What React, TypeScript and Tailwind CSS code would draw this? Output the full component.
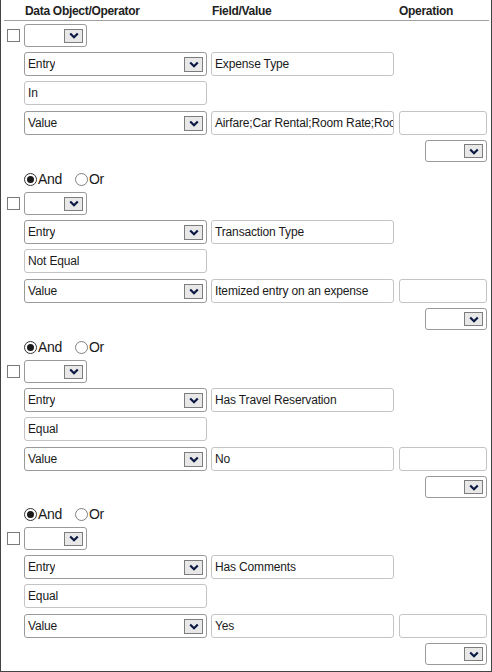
import React from "react";

const Chevron = () => (
  <svg width="10" height="7" viewBox="0 0 10 7">
    <path d="M1.2 1.5 L5 5.2 L8.8 1.5" fill="none" stroke="#0a1a44" strokeWidth="2.2" />
  </svg>
);

const DropBtn = ({ h }: { h: number }) => (
  <span
    className="flex items-center justify-center w-[19px] border border-[#7d7d7d] bg-[#e8e8e8] shrink-0"
    style={{ height: h }}
  >
    <Chevron />
  </span>
);

const Select = ({ label, w, h, btnH }: { label?: string; w: number; h: number; btnH: number }) => (
  <div
    className="flex items-center justify-between rounded-[3px] border border-[#9a9a9a] bg-white pl-[3px] pr-[3px] shrink-0"
    style={{ width: w, height: h }}
  >
    <span className="truncate">{label ?? ""}</span>
    <DropBtn h={btnH} />
  </div>
);

const Input = ({ value, w }: { value?: string; w: number }) => (
  <div
    className="flex items-center rounded-[3px] border border-[#c4c4c4] bg-white pl-[3px] overflow-hidden whitespace-nowrap shrink-0 h-[24px]"
    style={{ width: w }}
  >
    {value ?? ""}
  </div>
);

const Radio = ({ checked, label }: { checked: boolean; label: string }) => (
  <span className="flex items-center">
    <span
      className={
        "flex items-center justify-center w-[13px] h-[13px] rounded-full border bg-white " +
        (checked ? "border-[#333]" : "border-[#808080]")
      }
    >
      {checked && <span className="block w-[7px] h-[7px] rounded-full bg-[#1a1a1a]" />}
    </span>
    <span className="ml-[1px] text-[14px] leading-[16px] tracking-[-0.3px] text-[#1a1a1a]">{label}</span>
  </span>
);

type Row = { field: string; op: string; value: string };

const rows: Row[] = [
  { field: "Expense Type", op: "In", value: "Airfare;Car Rental;Room Rate;Room Tax" },
  { field: "Transaction Type", op: "Not Equal", value: "Itemized entry on an expense" },
  { field: "Has Travel Reservation", op: "Equal", value: "No" },
  { field: "Has Comments", op: "Equal", value: "Yes" },
];

const Block = ({ r, i }: { r: Row; i: number }) => (
  <div className="flex flex-col">
    {i === 0 ? (
      <div className="h-[3px]" />
    ) : (
      <div
        className={
          (i === 3 ? "h-[29px] pt-[3px]" : "h-[30px] pt-[4px]") + " pl-[23px] flex items-center gap-[13px]"
        }
      >
        <Radio checked label="And" />
        <Radio checked={false} label="Or" />
      </div>
    )}
    <div className="flex items-center pl-[6px] gap-[4px]">
      <span className="block w-[13px] h-[13px] border border-[#7a7a7a] bg-white" />
      <Select w={63} h={23} btnH={14} />
    </div>
    <div className="flex pl-[23px] mt-[5px]">
      <Select label="Entry" w={183} h={24} btnH={15} />
      <div className="ml-[4px]">
        <Input value={r.field} w={183} />
      </div>
    </div>
    <div className="flex pl-[23px] mt-[5px]">
      <Input value={r.op} w={183} />
    </div>
    <div className="flex pl-[23px] mt-[6px]">
      <Select label="Value" w={183} h={24} btnH={15} />
      <div className="ml-[4px]">
        <Input value={r.value} w={183} />
      </div>
      <div className="ml-[5px]">
        <Input w={88} />
      </div>
    </div>
    <div className="flex justify-end pr-[4px] mt-[5px]">
      <Select w={62} h={22} btnH={14} />
    </div>
  </div>
);

export default function App() {
  return (
    <div className="w-[492px] h-[672px] bg-white border-l border-r border-b border-[#444] overflow-hidden font-['Liberation_Sans',Arial,sans-serif] text-[12px] tracking-[-0.15px] text-[#1a1a1a]">
      <div className="h-[21px] ml-[3px] mr-[2px] border-b border-[#a0a0a0] flex pt-[3px] leading-[16px] font-bold text-[#222] tracking-[-0.3px]">
        <span className="ml-[21px] w-[187px]">Data Object/Operator</span>
        <span className="w-[187px]">Field/Value</span>
        <span>Operation</span>
      </div>
      {rows.map((r, i) => (
        <Block key={i} r={r} i={i} />
      ))}
    </div>
  );
}
